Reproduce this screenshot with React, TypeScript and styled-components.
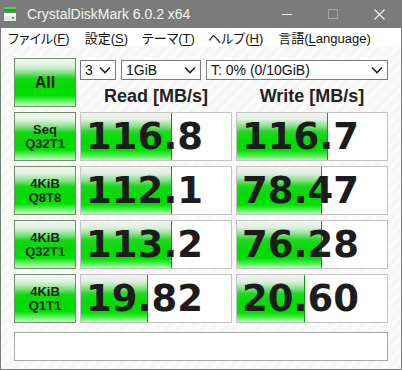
import styled, { createGlobalStyle } from 'styled-components';

const GlobalStyle = createGlobalStyle`
  html, body {
    margin: 0;
    padding: 0;
    background: #ffffff;
  }
  body {
    width: 402px;
    height: 370px;
    overflow: hidden;
    font-family: 'Liberation Sans', 'Noto Sans CJK JP', sans-serif;
  }
`;

const Window = styled.div`
  width: 402px;
  height: 370px;
  box-sizing: border-box;
  border: 1px solid #7b7b7b;
  border-top: none;
  display: flex;
  flex-direction: column;
`;

const TitleBar = styled.div`
  height: 28px;
  margin: 0 -1px;
  background: #7b7b7b;
  display: flex;
  align-items: center;
  color: #f4f4f4;
  font-size: 14px;
`;

const TitleIcon = styled.svg`
  margin: 0 7px 0 4px;
  flex-shrink: 0;
`;

const TitleText = styled.span`
  flex: 1;
  padding-bottom: 1px;
`;

const WinButton = styled.div`
  width: 46px;
  height: 28px;
  display: flex;
  align-items: center;
  justify-content: center;
`;

const MenuBar = styled.div`
  height: 19px;
  background: #ffffff;
  display: flex;
  align-items: center;
  font-size: 13px;
  font-feature-settings: 'palt';
  color: #111;
`;

const MenuItem = styled.span<{ $gap: number }>`
  padding-left: ${(p) => p.$gap}px;
  white-space: nowrap;

  u {
    text-decoration-thickness: 1px;
    text-underline-offset: 2px;
  }
`;

const Content = styled.div`
  flex: 1;
  padding: 11px 12px 0 13px;
  background-color: #f7f7f7;
  background-image: repeating-linear-gradient(
    -45deg,
    #f7f7f7 0px,
    #f7f7f7 4px,
    #fbfbfb 4px,
    #fbfbfb 8px
  );
  display: flex;
  flex-direction: column;
`;

const TopSection = styled.div`
  display: flex;
  gap: 4px;
`;

const TestButton = styled.div<{ $big?: boolean }>`
  width: 62px;
  height: 49px;
  box-sizing: border-box;
  border: 1px solid #6f8c6f;
  background: linear-gradient(
    to bottom,
    #f2f6f2 0%,
    #e2f2e2 14%,
    #7ee07e 30%,
    #10d810 42%,
    #00dc00 62%,
    #00e000 78%,
    #6cf06c 90%,
    #c4f8c4 100%
  );
  display: flex;
  align-items: center;
  justify-content: center;
  text-align: center;
  font-weight: bold;
  color: #1e1e1e;
  font-size: ${(p) => (p.$big ? '16px' : '13px')};
  line-height: ${(p) => (p.$big ? '18px' : '14px')};
  padding-top: ${(p) => (p.$big ? '0' : '1px')};
`;

const RightColumn = styled.div`
  width: 308px;
  display: flex;
  flex-direction: column;
`;

const SelectRow = styled.div`
  margin-top: 2px;
  display: flex;
  gap: 5px;
`;

const Select = styled.div<{ $w: number }>`
  width: ${(p) => p.$w}px;
  height: 20px;
  box-sizing: border-box;
  border: 1px solid #7a7a7a;
  background: #ffffff;
  display: flex;
  align-items: center;
  justify-content: space-between;
  padding: 0 4px 0 4px;
  font-size: 14px;
  color: #111;
`;

const HeaderRow = styled.div`
  height: 24px;
  margin-top: 4px;
  display: grid;
  grid-template-columns: 152px 152px;
  column-gap: 4px;
`;

const HeaderLabel = styled.div`
  text-align: center;
  font-weight: bold;
  font-size: 18px;
  line-height: 24px;
  color: #222;
`;

const Rows = styled.div`
  margin-top: 4px;
  display: flex;
  flex-direction: column;
  gap: 5px;
`;

const ScoreRow = styled.div`
  display: grid;
  grid-template-columns: 62px 152px 152px;
  column-gap: 4px;
  height: 49px;
`;

const ScoreCell = styled.div<{ $fill: number }>`
  box-sizing: border-box;
  border: 1px solid #c4c4c4;
  background-color: #ffffff;
  background-image: linear-gradient(#0a9a0a, #0a9a0a),
    linear-gradient(
      to bottom,
      #f2f4f2 0%,
      #e0eee0 14%,
      #88e088 28%,
      #20d820 40%,
      #00dc00 60%,
      #00e000 80%,
      #4cee4c 90%,
      #b4f6b4 100%
    );
  background-repeat: no-repeat;
  background-size: 1px 100%, ${(p) => p.$fill}px 100%;
  background-position: ${(p) => p.$fill - 1}px 0, 0 0;
  display: flex;
  align-items: center;
  padding-left: 5px;
  font-family: 'DejaVu Sans', sans-serif;
  font-weight: bold;
  font-size: 37px;
  color: #1c1c1c;
`;

const StatusBar = styled.div`
  margin-top: 9px;
  width: 374px;
  height: 29px;
  box-sizing: border-box;
  border: 1px solid #a8a8a8;
  background: #ffffff;
`;

const Chevron = () => (
  <svg width="12" height="8" viewBox="0 0 12 8">
    <polyline points="1,1.5 6,6.5 11,1.5" fill="none" stroke="#222" strokeWidth="1.6" />
  </svg>
);

const menus = [
  { gap: 7, pre: 'ファイル(', key: 'F', post: ')' },
  { gap: 15, pre: '設定(', key: 'S', post: ')' },
  { gap: 14, pre: 'テーマ(', key: 'T', post: ')' },
  { gap: 13, pre: 'ヘルプ(', key: 'H', post: ')' },
  { gap: 15, pre: '言語(', key: 'L', post: 'anguage)' },
];

const rows = [
  { label: ['Seq', 'Q32T1'], read: '116.8', write: '116.7', rf: 91, wf: 91 },
  { label: ['4KiB', 'Q8T8'], read: '112.1', write: '78.47', rf: 91, wf: 85 },
  { label: ['4KiB', 'Q32T1'], read: '113.2', write: '76.28', rf: 91, wf: 85 },
  { label: ['4KiB', 'Q1T1'], read: '19.82', write: '20.60', rf: 67, wf: 68 },
];

const App = () => (
  <>
    <GlobalStyle />
    <Window>
      <TitleBar>
        <TitleIcon width="16" height="16" viewBox="0 0 16 16">
          <rect x="0" y="1" width="12" height="2" fill="#3fe03f" />
          <rect x="0" y="3" width="12" height="2" fill="#16a816" />
          <rect x="0" y="7" width="12" height="8" fill="#e8e8e8" />
          <rect x="0" y="7" width="12" height="3" fill="#fafafa" />
          <rect x="8" y="11" width="2" height="2" fill="#1cc41c" />
        </TitleIcon>
        <TitleText>CrystalDiskMark 6.0.2 x64</TitleText>
        <WinButton>
          <svg width="10" height="10" viewBox="0 0 10 10">
            <line x1="0" y1="5.5" x2="10" y2="5.5" stroke="#f4f4f4" strokeWidth="1" />
          </svg>
        </WinButton>
        <WinButton>
          <svg width="10" height="10" viewBox="0 0 10 10">
            <rect x="0.5" y="0.5" width="9" height="9" fill="none" stroke="#a4a4a4" strokeWidth="1" />
          </svg>
        </WinButton>
        <WinButton>
          <svg width="11" height="11" viewBox="0 0 11 11">
            <path d="M0.5 0.5 L10.5 10.5 M10.5 0.5 L0.5 10.5" stroke="#f4f4f4" strokeWidth="1.1" />
          </svg>
        </WinButton>
      </TitleBar>
      <MenuBar>
        {menus.map((m) => (
          <MenuItem key={m.key} $gap={m.gap}>
            {m.pre}
            <u>{m.key}</u>
            {m.post}
          </MenuItem>
        ))}
      </MenuBar>
      <Content>
        <TopSection>
          <TestButton $big>All</TestButton>
          <RightColumn>
            <SelectRow>
              <Select $w={36}>
                3<Chevron />
              </Select>
              <Select $w={80}>
                1GiB<Chevron />
              </Select>
              <Select $w={182}>
                T: 0% (0/10GiB)<Chevron />
              </Select>
            </SelectRow>
            <HeaderRow>
              <HeaderLabel>Read [MB/s]</HeaderLabel>
              <HeaderLabel>Write [MB/s]</HeaderLabel>
            </HeaderRow>
          </RightColumn>
        </TopSection>
        <Rows>
          {rows.map((r) => (
            <ScoreRow key={r.label.join('-') + r.read}>
              <TestButton>
                {r.label[0]}
                <br />
                {r.label[1]}
              </TestButton>
              <ScoreCell $fill={r.rf}>{r.read}</ScoreCell>
              <ScoreCell $fill={r.wf}>{r.write}</ScoreCell>
            </ScoreRow>
          ))}
        </Rows>
        <StatusBar />
      </Content>
    </Window>
  </>
);

export default App;
